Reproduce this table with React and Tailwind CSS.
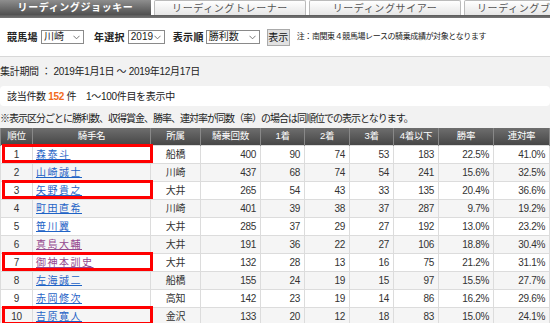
import React from "react";

const rows = [
  [1, "森泰斗", "船橋", 400, 90, 74, 53, 183, "22.5%", "41.0%", false, true],
  [2, "山崎誠士", "川崎", 437, 68, 74, 54, 241, "15.6%", "32.5%", false, false],
  [3, "矢野貴之", "大井", 265, 54, 43, 33, 135, "20.4%", "36.6%", false, true],
  [4, "町田直希", "川崎", 401, 39, 38, 37, 287, "9.7%", "19.2%", false, false],
  [5, "笹川翼", "大井", 285, 37, 29, 27, 192, "13.0%", "23.2%", false, false],
  [6, "真島大輔", "大井", 191, 36, 22, 27, 106, "18.8%", "30.4%", true, false],
  [7, "御神本訓史", "大井", 132, 28, 13, 16, 75, "21.2%", "31.1%", true, true],
  [8, "左海誠二", "船橋", 155, 24, 19, 15, 97, "15.5%", "27.7%", false, false],
  [9, "赤岡修次", "高知", 142, 23, 19, 14, 86, "16.2%", "29.6%", false, false],
  [10, "吉原寛人", "金沢", 133, 20, 12, 18, 83, "15.0%", "24.1%", false, true],
];

const heads = ["順位", "騎手名", "所属", "騎乗回数", "1着", "2着", "3着", "4着以下", "勝率", "連対率"];
const widths = ["w-[32px]", "w-[118px]", "w-[50px]", "w-[60px]", "w-[44px]", "w-[45px]", "w-[44px]", "w-[45px]", "w-[55px]", "w-[56px]"];

function Select({ value, w }) {
  return (
    <div className={`flex h-[14px] shrink-0 items-center justify-between border border-[#8a8a8a] bg-white pl-[2px] pr-[3px] text-[10px] leading-none text-[#222] ${w}`}>
      <span>{value}</span>
      <svg width="7" height="5" viewBox="0 0 8 5" fill="none" stroke="#666" strokeWidth="1">
        <path d="M0.5 0.5 L4 4 L7.5 0.5" />
      </svg>
    </div>
  );
}

export default function App() {
  return (
    <div className="h-[323px] w-[550px] overflow-hidden bg-[#f2f2f2] font-['Liberation_Sans','Noto_Sans_CJK_JP',sans-serif] text-[#333]">
      {/* tabs */}
      <div className="flex h-[15px] gap-[3px] overflow-hidden bg-white">
        <div className="flex w-[151px] shrink-0 items-center justify-center bg-gradient-to-b from-[#8e8e8e] to-[#505050] text-[10px] font-bold tracking-[0.6px] text-white">
          リーディングジョッキー
        </div>
        {["リーディングトレーナー", "リーディングサイアー"].map((t) => (
          <div
            key={t}
            className="flex w-[152px] shrink-0 items-center justify-center whitespace-nowrap rounded-t-[2px] border-x border-t border-[#bbb] bg-gradient-to-b from-white to-[#e6e6e6] text-[10px] tracking-[0.6px] text-[#555]"
          >
            {t}
          </div>
        ))}
        <div className="flex w-[152px] shrink-0 items-center whitespace-nowrap rounded-t-[2px] border-x border-t border-[#bbb] bg-gradient-to-b from-white to-[#e6e6e6] pl-[12px] text-[10px] tracking-[0.6px] text-[#555]">
          リーディングブ
        </div>
      </div>
      <div className="h-[3px] bg-gradient-to-b from-[#5a5a5a] to-[#777]" />

      {/* form */}
      <div className="flex h-[39px] items-center border-b border-[#d8d8d8] bg-white pl-[7px] text-[10px] text-[#222]">
        <span className="mr-[3px] font-bold tracking-[0.3px]">競馬場</span>
        <Select value="川崎" w="w-[43px]" />
        <span className="ml-[10px] mr-[3px] font-bold tracking-[0.3px]">年選択</span>
        <Select value="2019" w="w-[37px]" />
        <span className="ml-[8px] mr-[2px] font-bold tracking-[0.3px]">表示順</span>
        <Select value="勝利数" w="w-[54px]" />
        <div className="ml-[7px] flex h-[17px] w-[23px] shrink-0 items-center justify-center whitespace-nowrap border border-[#aaa] bg-[#e1e1e1] text-[10px] text-[#111]">
          表示
        </div>
        <span className="ml-[7px] whitespace-nowrap text-[8px] tracking-[-0.4px] text-[#222]">注：南関東４競馬場レースの騎乗成績が対象となります</span>
      </div>

      <div className="pt-[6px] text-[10px]">
        <div className="h-[17px] leading-[17px] tracking-[-0.3px] text-[#222]">集計期間 ： 2019年1月1日 ～ 2019年12月17日</div>
        <div className="mt-[6px] flex h-[20px] items-center rounded-[4px] bg-white pl-[7px] tracking-[-0.3px] text-[#222]">
          該当件数&nbsp;<span className="font-bold text-[#f26a1b]">152</span>&nbsp;件　1～100件目を表示中
        </div>
        <div className="mt-[4px] h-[18px] whitespace-nowrap leading-[18px] tracking-[-1px] text-[#222]">
          ※表示区分ごとに勝利数、収得賞金、勝率、連対率が同数（率）の場合は同順位での表示となります。
        </div>
      </div>

      <table className="w-[549px] table-fixed border-collapse bg-white text-[10px] tracking-[-0.3px] text-[#333]">
        <thead>
          <tr className="h-[17px] bg-gradient-to-b from-[#6e6e6e] to-[#474747]">
            {heads.map((h, i) => (
              <th key={h} className={`${widths[i]} border-x border-[#888] p-0 text-center text-[9.5px] font-normal text-white`}>
                {h}
              </th>
            ))}
          </tr>
        </thead>
        <tbody>
          {rows.map((r) => (
            <tr key={r[0]} className={`h-[18px] ${r[0] % 2 === 0 ? "bg-[#f5f5f5]" : "bg-white"}`}>
              <td className="relative border border-[#dcdcdc] p-0 text-center">
                {r[0]}
                {r[11] && (
                  <div className="pointer-events-none absolute left-[1px] top-[-2px] h-[19px] w-[151px] border-[3px] border-[#f00]" />
                )}
              </td>
              <td className="border border-[#dcdcdc] p-0 pl-[3px]">
                <a className={`tracking-[1.5px] underline ${r[10] ? "text-[#94498f]" : "text-[#1f63c6]"}`}>{r[1]}</a>
              </td>
              <td className="border border-[#dcdcdc] p-0 text-center">{r[2]}</td>
              {r.slice(3, 10).map((v, i) => (
                <td key={i} className="border border-[#dcdcdc] p-0 pr-[4px] text-right">
                  {v}
                </td>
              ))}
            </tr>
          ))}
        </tbody>
      </table>
    </div>
  );
}
